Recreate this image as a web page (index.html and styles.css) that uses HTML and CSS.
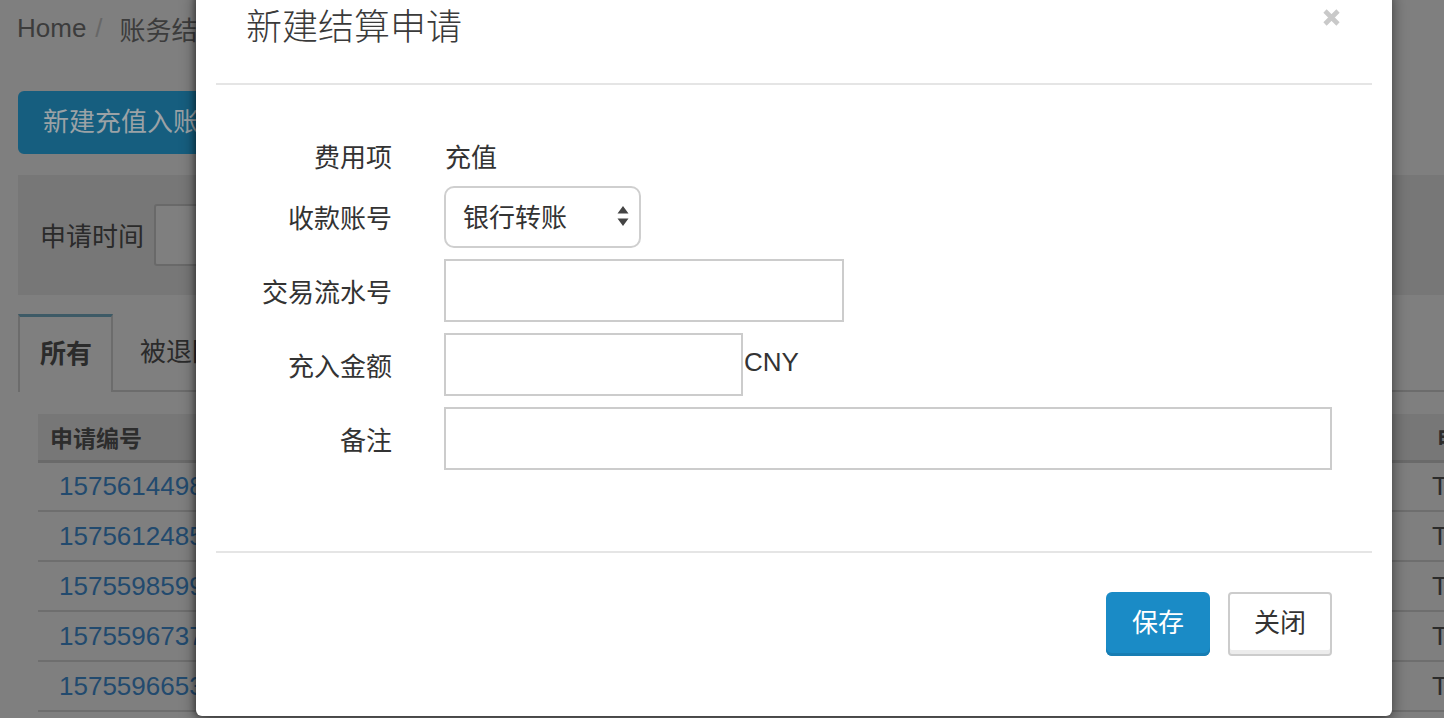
FILE: index.html
```html
<!DOCTYPE html>
<html lang="zh-CN">
<head>
<meta charset="utf-8">
<title>新建结算申请</title>
<link rel="stylesheet" href="styles.css">
</head>
<body>
<div class="page">
  <div class="breadcrumb">
    <span class="crumb">Home</span><span class="sep">/</span><span class="crumb">账务结算</span>
  </div>
  <div class="toolbar">
    <button class="btn-page">新建充值入账</button>
  </div>
  <div class="filter">
    <span class="filter-label">申请时间</span>
    <span class="filter-input"></span>
  </div>
  <div class="tabs">
    <span class="tab active">所有</span>
    <span class="tab">被退回</span>
    <span class="tab-fill"></span>
  </div>
  <table class="grid">
    <colgroup><col class="c1"><col class="c2"></colgroup>
    <thead><tr><th>申请编号</th><th class="last-h">申请</th></tr></thead>
    <tbody>
      <tr><td><a class="num">1575614498321</a></td><td class="last">T</td></tr>
      <tr><td><a class="num">1575612485772</a></td><td class="last">T</td></tr>
      <tr><td><a class="num">1575598599104</a></td><td class="last">T</td></tr>
      <tr><td><a class="num">1575596737650</a></td><td class="last">T</td></tr>
      <tr><td><a class="num">1575596653418</a></td><td class="last">T</td></tr>
    </tbody>
  </table>
</div>

<div class="modal">
  <div class="modal-header">
    <h4 class="modal-title">新建结算申请</h4>
    <button class="close" aria-label="关闭">
      <svg width="19" height="19" viewBox="0 0 19 19"><path d="M3 3 L16 16 M16 3 L3 16" stroke="#c9c9c9" stroke-width="4.6" stroke-linecap="butt"/></svg>
    </button>
  </div>
  <div class="modal-body">
    <div class="row row-static">
      <label class="lbl">费用项</label>
      <div class="ctl"><span class="static">充值</span></div>
    </div>
    <div class="row">
      <label class="lbl">收款账号</label>
      <div class="ctl">
        <div class="select">
          <span>银行转账</span>
          <svg class="arrows" width="12" height="22" viewBox="0 0 12 22"><path d="M6 1 L11.5 8.5 L0.5 8.5 Z M6 21 L11.5 13.5 L0.5 13.5 Z" fill="#444"/></svg>
        </div>
      </div>
    </div>
    <div class="row">
      <label class="lbl">交易流水号</label>
      <div class="ctl"><input class="input w400" type="text"></div>
    </div>
    <div class="row">
      <label class="lbl">充入金额</label>
      <div class="ctl"><input class="input w300" type="text"><span class="unit">CNY</span></div>
    </div>
    <div class="row">
      <label class="lbl">备注</label>
      <div class="ctl"><input class="input wfull" type="text"></div>
    </div>
  </div>
  <div class="modal-footer">
    <button class="btn btn-primary">保存</button>
    <button class="btn btn-default">关闭</button>
  </div>
</div>
</body>
</html>
```

FILE: styles.css
```css
* { box-sizing: border-box; }
html, body { margin: 0; padding: 0; }
body {
  background: #7f7f7f;
  font-family: "Liberation Sans", "Noto Sans CJK SC", sans-serif;
  color: #3b3b3b;
  width: 1444px;
  height: 718px;
  overflow: hidden;
  position: relative;
}
.page { padding: 0 0 0 18px; }

.breadcrumb {
  height: 56px;
  display: flex;
  align-items: center;
  font-size: 26px;
  margin-left: -1px;
  color: #3c3c3c;
  white-space: nowrap;
}
.breadcrumb .sep { color: #676767; margin: 0 17px 0 9px; }

.toolbar { padding-top: 35px; height: 119px; }
.btn-page {
  display: block;
  height: 63px;
  width: 240px;
  border: 0;
  border-radius: 6px;
  background: #165e7f;
  color: #9ba2a6;
  font-family: inherit;
  font-size: 26px;
  text-align: left;
  padding: 0 0 6px 25px;
  white-space: nowrap;
}

.filter {
  height: 120px;
  background: #777777;
  display: flex;
  align-items: center;
  padding-left: 22px;
}
.filter-label { font-size: 26px; color: #2a2a2a; margin-right: 10px; white-space: nowrap; padding-bottom: 2px; }
.filter-input {
  width: 300px;
  height: 62px;
  border: 2px solid #696969;
  background: #7f7f7f;
  border-radius: 3px;
}

.tabs {
  margin-top: 19px;
  height: 78px;
  display: flex;
  align-items: stretch;
}
.tab {
  display: flex;
  align-items: center;
  font-size: 26px;
  color: #2b2b2b;
  padding: 0 22px 6px 27px;
  border-bottom: 2px solid #6c6c6c;
  white-space: nowrap;
}
.tab.active {
  width: 95px;
  padding: 0 0 6px 20px;
  border: 2px solid #6c6c6c;
  border-top: 3px solid #3d5a66;
  border-bottom: 0;
  font-weight: bold;
}
.tab-fill { flex: 1; border-bottom: 2px solid #6c6c6c; }

.grid {
  margin: 22px 0 0 20px;
  border-collapse: collapse;
  table-layout: fixed;
  width: 1500px;
}
.grid col.c1 { width: 1382px; }
.grid col.c2 { width: 118px; }
.grid th {
  height: 47px;
  background: #777777;
  border-bottom: 3px solid #6a6a6a;
  text-align: left;
  font-size: 23px;
  font-weight: bold;
  color: #2d2d2d;
  padding: 0 0 0 12px;
  white-space: nowrap;
  overflow: hidden;
}
.grid th.last-h { padding-left: 17px; }
.grid td {
  height: 50px;
  border-bottom: 2px solid #6e6e6e;
  font-size: 26px;
  padding: 0 0 0 21px;
  white-space: nowrap;
  overflow: hidden;
  color: #2b2b2b;
}
.grid td.last { padding-left: 12px; }
.num { color: #224a6e; text-decoration: none; }

/* Modal */
.modal {
  position: absolute;
  left: 196px;
  top: -12px;
  width: 1196px;
  height: 728px;
  background: #fff;
  border-radius: 6px;
  box-shadow: 0 5px 15px rgba(0,0,0,0.5), -2px 0 4px rgba(0,0,0,0.25);
  padding: 0 20px;
  color: #333;
  font-family: "Liberation Sans", "Noto Sans CJK SC", sans-serif;
}
.modal-header {
  position: relative;
  padding: 14px 30px 29px;
  border-bottom: 2px solid #e5e5e5;
}
.modal-title {
  margin: 0;
  font-size: 36px;
  line-height: 52px;
  font-weight: 300;
  color: #3a3a3a;
}
.close {
  position: absolute;
  right: 31px;
  top: 20px;
  border: 0;
  background: transparent;
  padding: 0;
  width: 19px;
  height: 19px;
  display: block;
}
.close svg { display: block; }

.modal-body {
  padding: 45px 0 81px;
  display: flex;
  flex-direction: column;
  gap: 11px;
}
.row {
  display: flex;
  align-items: center;
  min-height: 63px;
}
.row-static { min-height: 50px; margin-bottom: -6px; }
.lbl {
  width: 176px;
  text-align: right;
  font-size: 26px;
  color: #333;
  flex: none;
  padding-bottom: 1px;
}
.row-static .lbl { padding-bottom: 0; }
.ctl {
  margin-left: 52px;
  display: flex;
  align-items: center;
  flex: 1;
}
.static { font-size: 26px; color: #333; margin-left: 1px; }
.select {
  width: 197px;
  height: 62px;
  border: 2px solid #cfcfcf;
  border-radius: 10px;
  display: flex;
  align-items: center;
  justify-content: space-between;
  padding: 0 10px 2px 17px;
  font-size: 26px;
  color: #333;
  background: #fff;
}
.arrows { display: block; }
.input {
  height: 63px;
  border: 2px solid #cccccc;
  border-radius: 0;
  background: #fff;
  font-size: 26px;
  padding: 0 12px;
  margin: 0;
  outline: none;
}
.w400 { width: 400px; }
.w300 { width: 299px; }
.wfull { width: 888px; }
.unit { font-size: 26px; color: #333; margin-left: 1px; padding-bottom: 5px; }

.modal-footer {
  border-top: 2px solid #e5e5e5;
  padding: 39px 40px 0 0;
  display: flex;
  justify-content: flex-end;
  gap: 18px;
}
.btn {
  width: 104px;
  height: 64px;
  border-radius: 6px;
  font-family: inherit;
  font-size: 26px;
  padding: 0 0 7px;
}
.btn-primary {
  background: #1a8bc6;
  color: #fff;
  border: 0;
  box-shadow: inset 0 -3px 0 #177db3;
}
.btn-default {
  background: #fff;
  color: #333;
  border: 2px solid #cccccc;
  border-radius: 4px;
  box-shadow: inset 0 -4px 0 #ececec;
}
```
